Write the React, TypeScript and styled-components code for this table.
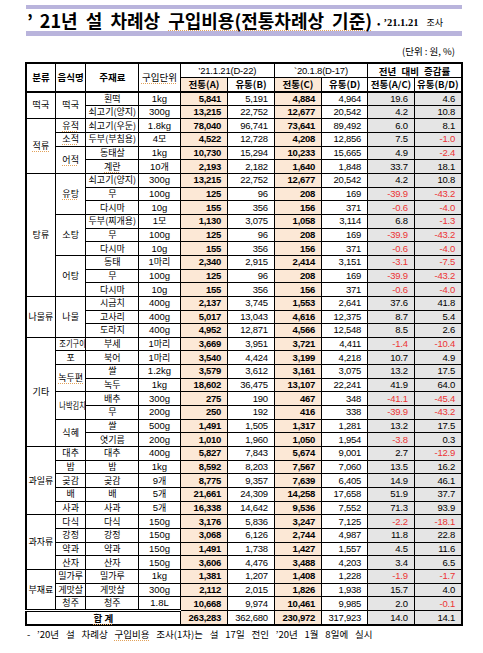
import React from 'react';
import styled, { createGlobalStyle } from 'styled-components';

const KO = `"Noto Sans CJK KR", "Noto Sans", sans-serif`;
const NUM = `"Liberation Sans", Arial, sans-serif`;

const Global = createGlobalStyle`
  html, body { margin: 0; padding: 0; background: #fff; }
  body { font-family: ${KO}; color: #000; }
`;

const PEACH = '#fce8d6';
const GRAY = '#e5e5e5';
const RED = '#ec3434';
const LAV = '#b9b4dc';

const Page = styled.div`
  width: 483px;
  height: 653px;
  box-sizing: border-box;
  padding: 5px 0 0 25px;
  overflow: hidden;
`;

const TitleBar = styled.div`
  margin-left: 1px;
  width: 436px;
  height: 22px;
  border-top: 4px solid ${LAV};
  border-bottom: 5px solid ${LAV};
  display: flex;
  align-items: center;
`;

const TitleText = styled.h1`
  margin: 0 0 0 1px;
  font-family: ${KO};
  font-size: 18px;
  font-weight: 700;
  line-height: 22px;
  word-spacing: 4px;
  white-space: nowrap;
`;

const Apos = styled.span`
  margin-right: 7px;
`;

const Spell = styled.span`
  text-decoration: underline dotted #e2a25a;
  text-decoration-thickness: 1px;
  text-underline-offset: 2px;
`;

const DateNote = styled.span`
  margin-left: 5px;
  margin-top: 4px;
  font-size: 10px;
  white-space: nowrap;
  display: flex;
  align-items: center;
  gap: 3px;
`;

const NoteDate = styled.span`
  font-family: "Liberation Serif", serif;
  font-size: 10.5px;
  font-weight: 700;
`;

const NoteWord = styled.span`
  font-family: ${KO};
  font-size: 9px;
  margin-left: 5px;
`;

const UnitLine = styled.div`
  width: 430px;
  margin-top: 8px;
  height: 14px;
  text-align: right;
  font-size: 9.5px;
  line-height: 14px;
  font-family: ${KO};
`;

const Table = styled.table`
  margin-top: 4px;
  width: 436px;
  border-collapse: collapse;
  table-layout: fixed;
  border: 2px solid #000;
`;

const HeadRow = styled.tr<{ $h: number }>`
  height: ${(p) => p.$h}px;
`;

const Row = styled.tr`
  height: 13.67px;
`;

const Th = styled.th<{ $bg?: string; $bold?: boolean; $bottom?: boolean; $spaced?: boolean }>`
  border: 1px solid #000;
  ${(p) => (p.$bottom ? 'border-bottom: 2px solid #000;' : '')}
  background: ${(p) => p.$bg || '#fff'};
  font-family: ${KO};
  font-size: 9.5px;
  font-weight: ${(p) => (p.$bold ? 700 : 400)};
  word-spacing: ${(p) => (p.$spaced ? '3px' : 'normal')};
  line-height: 12px;
  padding: 0;
  text-align: center;
  white-space: nowrap;
  overflow: hidden;
`;

const DateTh = styled(Th)`
  font-family: ${NUM};
  font-size: 9.5px;
  letter-spacing: -0.2px;
`;

const Td = styled.td<{ $bg?: string }>`
  border: 1px solid #000;
  background: ${(p) => p.$bg || '#fff'};
  font-family: ${KO};
  font-size: 9px;
  line-height: 12px;
  padding: 0;
  text-align: center;
  white-space: nowrap;
  overflow: visible;
`;

const NumTd = styled(Td)<{ $bold?: boolean; $red?: boolean }>`
  font-family: ${NUM};
  font-size: 9.5px;
  letter-spacing: -0.25px;
  font-weight: ${(p) => (p.$bold ? 700 : 400)};
  color: ${(p) => (p.$red ? RED : '#000')};
  text-align: right;
  padding-right: 6px;
  overflow: hidden;
`;

const UnitTd = styled(Td)`
  font-family: ${NUM};
  font-size: 9.5px;
`;

const KoUnit = styled.span`
  font-family: ${KO};
  font-size: 9px;
`;

const TotalLabel = styled.td`
  border: 1px solid #000;
  border-top: 3px double #000;
  font-family: ${KO};
  font-size: 9.5px;
  font-weight: 700;
  text-align: center;
  padding: 0;
  line-height: 12px;
`;

const Squeeze = styled.span<{ $s: number }>`
  display: inline-block;
  transform: scaleX(${(p) => p.$s});
  transform-origin: center;
`;

const Foot = styled.div`
  margin-top: 2px;
  margin-left: 2px;
  font-family: ${KO};
  font-size: 9.5px;
  line-height: 12px;
  word-spacing: 4.7px;
  white-space: nowrap;
`;

type Item = [string, string, string, string, string, string, string, string];
interface Sub {
  name: string;
  items: Item[];
}
interface Group {
  cat: string;
  subs: Sub[];
}

const groups: Group[] = [
  {
    cat: '떡국',
    subs: [
      {
        name: '떡국',
        items: [
          ['횐떡', '1kg', '5,841', '5,191', '4,884', '4,964', '19.6', '4.6'],
          ['쇠고기(양지)', '300g', '13,215', '22,752', '12,677', '20,542', '4.2', '10.8'],
        ],
      },
    ],
  },
  {
    cat: '적류',
    subs: [
      { name: '유적', items: [['쇠고기(우둔)', '1.8kg', '78,040', '96,741', '73,641', '89,492', '6.0', '8.1']] },
      { name: '소적', items: [['두부(부침용)', '4모', '4,522', '12,728', '4,208', '12,856', '7.5', '-1.0']] },
      {
        name: '어적',
        items: [
          ['동태살', '1kg', '10,730', '15,294', '10,233', '15,665', '4.9', '-2.4'],
          ['계란', '10개', '2,193', '2,182', '1,640', '1,848', '33.7', '18.1'],
        ],
      },
    ],
  },
  {
    cat: '탕류',
    subs: [
      {
        name: '유탕',
        items: [
          ['쇠고기(양지)', '300g', '13,215', '22,752', '12,677', '20,542', '4.2', '10.8'],
          ['무', '100g', '125', '96', '208', '169', '-39.9', '-43.2'],
          ['다시마', '10g', '155', '356', '156', '371', '-0.6', '-4.0'],
        ],
      },
      {
        name: '소탕',
        items: [
          ['두부(찌개용)', '1모', '1,130', '3,075', '1,058', '3,114', '6.8', '-1.3'],
          ['무', '100g', '125', '96', '208', '169', '-39.9', '-43.2'],
          ['다시마', '10g', '155', '356', '156', '371', '-0.6', '-4.0'],
        ],
      },
      {
        name: '어탕',
        items: [
          ['동태', '1마리', '2,340', '2,915', '2,414', '3,151', '-3.1', '-7.5'],
          ['무', '100g', '125', '96', '208', '169', '-39.9', '-43.2'],
          ['다시마', '10g', '155', '356', '156', '371', '-0.6', '-4.0'],
        ],
      },
    ],
  },
  {
    cat: '나물류',
    subs: [
      {
        name: '나물',
        items: [
          ['시금치', '400g', '2,137', '3,745', '1,553', '2,641', '37.6', '41.8'],
          ['고사리', '400g', '5,017', '13,043', '4,616', '12,375', '8.7', '5.4'],
          ['도라지', '400g', '4,952', '12,871', '4,566', '12,548', '8.5', '2.6'],
        ],
      },
    ],
  },
  {
    cat: '기타',
    subs: [
      { name: '조기구이', items: [['부세', '1마리', '3,669', '3,951', '3,721', '4,411', '-1.4', '-10.4']] },
      { name: '포', items: [['북어', '1마리', '3,540', '4,424', '3,199', '4,218', '10.7', '4.9']] },
      {
        name: '녹두편',
        items: [
          ['쌀', '1.2kg', '3,579', '3,612', '3,161', '3,075', '13.2', '17.5'],
          ['녹두', '1kg', '18,602', '36,475', '13,107', '22,241', '41.9', '64.0'],
        ],
      },
      {
        name: '나박김치',
        items: [
          ['배추', '300g', '275', '190', '467', '348', '-41.1', '-45.4'],
          ['무', '200g', '250', '192', '416', '338', '-39.9', '-43.2'],
        ],
      },
      {
        name: '식혜',
        items: [
          ['쌀', '500g', '1,491', '1,505', '1,317', '1,281', '13.2', '17.5'],
          ['엿기름', '200g', '1,010', '1,960', '1,050', '1,954', '-3.8', '0.3'],
        ],
      },
    ],
  },
  {
    cat: '과일류',
    subs: [
      { name: '대추', items: [['대추', '400g', '5,827', '7,843', '5,674', '9,001', '2.7', '-12.9']] },
      { name: '밤', items: [['밤', '1kg', '8,592', '8,203', '7,567', '7,060', '13.5', '16.2']] },
      { name: '곶감', items: [['곶감', '9개', '8,775', '9,357', '7,639', '6,405', '14.9', '46.1']] },
      { name: '배', items: [['배', '5개', '21,661', '24,309', '14,258', '17,658', '51.9', '37.7']] },
      { name: '사과', items: [['사과', '5개', '16,338', '14,642', '9,536', '7,552', '71.3', '93.9']] },
    ],
  },
  {
    cat: '과자류',
    subs: [
      { name: '다식', items: [['다식', '150g', '3,176', '5,836', '3,247', '7,125', '-2.2', '-18.1']] },
      { name: '강정', items: [['강정', '150g', '3,068', '6,126', '2,744', '4,987', '11.8', '22.8']] },
      { name: '약과', items: [['약과', '150g', '1,491', '1,738', '1,427', '1,557', '4.5', '11.6']] },
      { name: '산자', items: [['산자', '150g', '3,606', '4,476', '3,488', '4,203', '3.4', '6.5']] },
    ],
  },
  {
    cat: '부재료',
    subs: [
      { name: '밀가루', items: [['밀가루', '1kg', '1,381', '1,207', '1,408', '1,228', '-1.9', '-1.7']] },
      { name: '게맛살', items: [['게맛살', '300g', '2,112', '2,015', '1,826', '1,938', '15.7', '4.0']] },
      { name: '청주', items: [['청주', '1.8L', '10,668', '9,974', '10,461', '9,985', '2.0', '-0.1']] },
    ],
  },
];

const spell = new Set(['적류', '유적', '소적', '어적', '계란', '유탕', '녹두편']);
const squeeze: Record<string, number> = { 조기구이: 0.8, 나박김치: 0.8 };

const Label: React.FC<{ text: string }> = ({ text }) => {
  let node: React.ReactNode = text;
  if (squeeze[text]) node = <Squeeze $s={squeeze[text]}>{text}</Squeeze>;
  if (spell.has(text)) node = <Spell>{node}</Spell>;
  return <>{node}</>;
};

const Unit: React.FC<{ u: string }> = ({ u }) => {
  const m = u.match(/^([\d.]+)(.*)$/);
  if (!m) return <>{u}</>;
  const rest = m[2];
  if (/[가-힣]/.test(rest)) {
    return (
      <>
        {m[1]}
        <KoUnit>{rest}</KoUnit>
      </>
    );
  }
  return <>{u}</>;
};

const colWidths = [29.3, 30.7, 52.7, 41.6, 47.4, 46.6, 47.4, 46, 46.6, 47.7];

const NumCells: React.FC<{ v: string[] }> = ({ v }) => (
  <>
    <NumTd $bg={PEACH} $bold>{v[0]}</NumTd>
    <NumTd>{v[1]}</NumTd>
    <NumTd $bg={PEACH} $bold>{v[2]}</NumTd>
    <NumTd>{v[3]}</NumTd>
    <NumTd $bg={GRAY} $red={v[4].startsWith('-')}>{v[4]}</NumTd>
    <NumTd $bg={GRAY} $red={v[5].startsWith('-')}>{v[5]}</NumTd>
  </>
);

export default function App() {
  const rows: React.ReactNode[] = [];
  groups.forEach((g, gi) => {
    const total = g.subs.reduce((s, x) => s + x.items.length, 0);
    let first = true;
    g.subs.forEach((s, si) => {
      s.items.forEach((it, ii) => {
        rows.push(
          <Row key={`${gi}-${si}-${ii}`}>
            {first && (
              <Td rowSpan={total}>
                <Label text={g.cat} />
              </Td>
            )}
            {ii === 0 && (
              <Td rowSpan={s.items.length}>
                <Label text={s.name} />
              </Td>
            )}
            <Td>
              <Label text={it[0]} />
            </Td>
            <UnitTd>
              <Unit u={it[1]} />
            </UnitTd>
            <NumCells v={it.slice(2)} />
          </Row>
        );
        first = false;
      });
    });
  });

  return (
    <Page>
      <Global />
      <TitleBar>
        <TitleText>
          <Apos>’</Apos>21년 설 차례상 <Spell>구입비용(전통차례상 기준)</Spell>
        </TitleText>
        <DateNote>
          <span>•</span>
          <NoteDate>’21.1.21</NoteDate>
          <NoteWord>조사</NoteWord>
        </DateNote>
      </TitleBar>
      <UnitLine>(단위 : 원, %)</UnitLine>
      <Table>
        <colgroup>
          {colWidths.map((w, i) => (
            <col key={i} style={{ width: `${w}px` }} />
          ))}
        </colgroup>
        <thead>
          <HeadRow $h={14.5}>
            <Th rowSpan={2} $bold $bottom>분류</Th>
            <Th rowSpan={2} $bold $bottom>음식명</Th>
            <Th rowSpan={2} $bold $bottom>주재료</Th>
            <Th rowSpan={2} $bottom>
              <Spell>구입단위</Spell>
            </Th>
            <DateTh colSpan={2}>’21.1.21(D-22)</DateTh>
            <DateTh colSpan={2}>`20.1.8(D-17)</DateTh>
            <Th colSpan={2} $bold $spaced>
              전년 대비 증감률
            </Th>
          </HeadRow>
          <HeadRow $h={14}>
            <Th $bg={PEACH} $bold $bottom>전통(A)</Th>
            <Th $bold $bottom>유통(B)</Th>
            <Th $bg={PEACH} $bold $bottom>전통(C)</Th>
            <Th $bold $bottom>유통(D)</Th>
            <Th $bold $bottom>전통(A/C)</Th>
            <Th $bold $bottom>유통(B/D)</Th>
          </HeadRow>
        </thead>
        <tbody>
          {rows}
          <Row>
            <TotalLabel colSpan={4}>
              <Spell>합 계</Spell>
            </TotalLabel>
            <NumCells v={['263,283', '362,680', '230,972', '317,923', '14.0', '14.1']} />
          </Row>
        </tbody>
      </Table>
      <Foot>- ’20년 설 차례상 <Spell>구입비용</Spell> 조사(1차)는 설 17일 전인 ’20년 1월 8일에 실시</Foot>
    </Page>
  );
}
